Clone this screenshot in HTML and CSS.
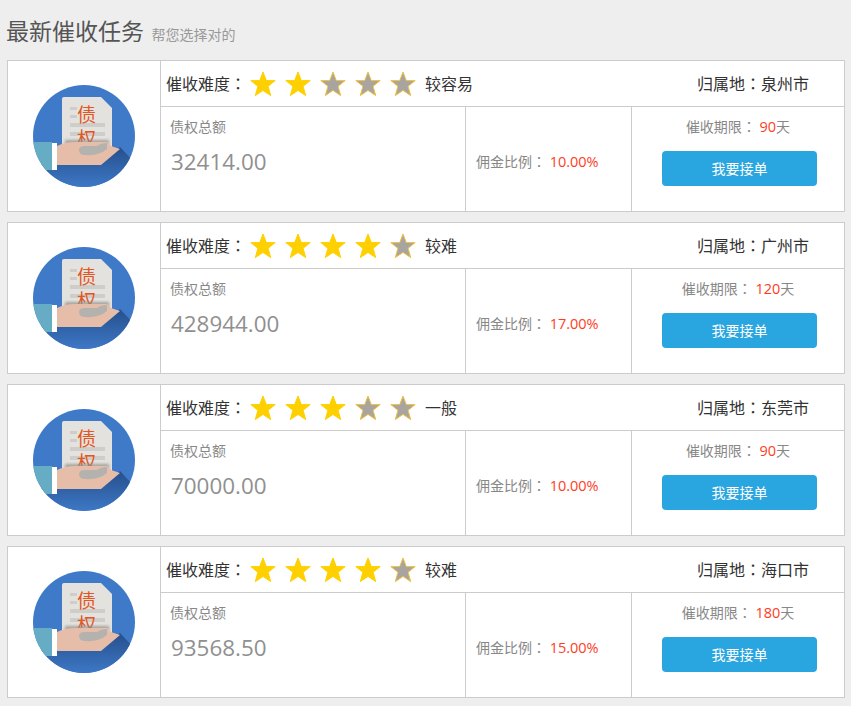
FILE: index.html
```html
<!DOCTYPE html>
<html lang="zh-CN">

<head>
    <meta charset="UTF-8">
    <title>最新催收任务</title>
    <link rel="stylesheet" href="styles.css">
</head>

<body>

    <svg class="defs" width="0" height="0">
        <defs>
            <clipPath id="round"><circle cx="51" cy="51" r="51"/></clipPath>
            <filter id="soft" x="-20%" y="-50%" width="140%" height="200%"><feGaussianBlur stdDeviation="1.5"/></filter>
            <linearGradient id="shade" x1="0" y1="0" x2="0" y2="1">
                <stop offset="0" stop-color="#264f8c"/>
                <stop offset="1" stop-color="#3d78c6"/>
            </linearGradient>
            <symbol id="paper" viewBox="0 0 102 102">
                <g clip-path="url(#round)">
                    <rect width="102" height="102" fill="#3e7ac8"/>
                    <path d="M0 78H68L87 62L102 78V102H0Z" fill="url(#shade)"/>
                </g>
                <path d="M31 12H68L79 23V62H29V14Q29 12 31 12Z" fill="#e4e2df"/>
                <path d="M37 22H44V25H37ZM37 30H44V33H37ZM37 38H72V42H37ZM37 47H72V51H37Z" fill="#cfcdca"/>
            </symbol>
            <symbol id="hand" viewBox="0 0 102 102">
                <path d="M32 55H76V60H32Z" fill="#8f8d8a" opacity=".75" filter="url(#soft)"/>
                <g clip-path="url(#round)">
                    <path d="M0 57H19V85H0Z" fill="#65acc4"/>
                </g>
                <rect x="19" y="58" width="5" height="27" fill="#fff"/>
                <path d="M24 61Q32 57 42 57H74L78 61L87 64L68 80H24Z" fill="#e6bda8"/>
                <path d="M46 65Q46 61 52 61H64Q68 58 74 58V64Q66 71 52 70Q46 70 46 65Z" fill="#b4b2af"/>
            </symbol>
        </defs>
    </svg>

    <h2 class="title">最新催收任务 <small>帮您选择对的</small></h2>

    <!-- 任务列表 -->
    <div class="task">
        <div class="pic">
            <svg class="badge" width="102" height="102" viewBox="0 0 102 102">
                <use href="#paper"/>
                <text x="53.5" y="37" class="badge-text">债<tspan x="53.5" dy="24">权</tspan></text>
                <use href="#hand"/>
            </svg>
        </div>
        <div class="info">
            <div class="head">
                <span class="level-label">催收难度<span class="colon">：</span></span>
                <span class="stars">
                    <svg class="star on" viewBox="0 0 26 26"><path d="M13 1L16.3 9.6H25.2L18.1 15.3L20.7 24.6L13 19.4L5.3 24.6L7.9 15.3L.8 9.6H9.7Z"/></svg>
                    <svg class="star on" viewBox="0 0 26 26"><path d="M13 1L16.3 9.6H25.2L18.1 15.3L20.7 24.6L13 19.4L5.3 24.6L7.9 15.3L.8 9.6H9.7Z"/></svg>
                    <svg class="star" viewBox="0 0 26 26"><path d="M13 1L16.3 9.6H25.2L18.1 15.3L20.7 24.6L13 19.4L5.3 24.6L7.9 15.3L.8 9.6H9.7Z"/></svg>
                    <svg class="star" viewBox="0 0 26 26"><path d="M13 1L16.3 9.6H25.2L18.1 15.3L20.7 24.6L13 19.4L5.3 24.6L7.9 15.3L.8 9.6H9.7Z"/></svg>
                    <svg class="star" viewBox="0 0 26 26"><path d="M13 1L16.3 9.6H25.2L18.1 15.3L20.7 24.6L13 19.4L5.3 24.6L7.9 15.3L.8 9.6H9.7Z"/></svg>
                </span>
                <span class="level">较容易</span>
                <span class="area">归属地<span class="colon">：</span>泉州市</span>
            </div>
            <div class="body">
                <div class="amount">
                    <p class="amount-label">债权总额</p>
                    <p class="amount-num">32414.00</p>
                </div>
                <div class="rate">佣金比例<span class="colon">：</span> <em>10.00%</em></div>
                <div class="limit">
                    <p class="limit-text">催收期限<span class="colon">：</span> <em>90</em>天</p>
                    <a class="btn" href="#">我要接单</a>
                </div>
            </div>
        </div>
    </div>

    <div class="task">
        <div class="pic">
            <svg class="badge" width="102" height="102" viewBox="0 0 102 102">
                <use href="#paper"/>
                <text x="53.5" y="37" class="badge-text">债<tspan x="53.5" dy="24">权</tspan></text>
                <use href="#hand"/>
            </svg>
        </div>
        <div class="info">
            <div class="head">
                <span class="level-label">催收难度<span class="colon">：</span></span>
                <span class="stars">
                    <svg class="star on" viewBox="0 0 26 26"><path d="M13 1L16.3 9.6H25.2L18.1 15.3L20.7 24.6L13 19.4L5.3 24.6L7.9 15.3L.8 9.6H9.7Z"/></svg>
                    <svg class="star on" viewBox="0 0 26 26"><path d="M13 1L16.3 9.6H25.2L18.1 15.3L20.7 24.6L13 19.4L5.3 24.6L7.9 15.3L.8 9.6H9.7Z"/></svg>
                    <svg class="star on" viewBox="0 0 26 26"><path d="M13 1L16.3 9.6H25.2L18.1 15.3L20.7 24.6L13 19.4L5.3 24.6L7.9 15.3L.8 9.6H9.7Z"/></svg>
                    <svg class="star on" viewBox="0 0 26 26"><path d="M13 1L16.3 9.6H25.2L18.1 15.3L20.7 24.6L13 19.4L5.3 24.6L7.9 15.3L.8 9.6H9.7Z"/></svg>
                    <svg class="star" viewBox="0 0 26 26"><path d="M13 1L16.3 9.6H25.2L18.1 15.3L20.7 24.6L13 19.4L5.3 24.6L7.9 15.3L.8 9.6H9.7Z"/></svg>
                </span>
                <span class="level">较难</span>
                <span class="area">归属地<span class="colon">：</span>广州市</span>
            </div>
            <div class="body">
                <div class="amount">
                    <p class="amount-label">债权总额</p>
                    <p class="amount-num">428944.00</p>
                </div>
                <div class="rate">佣金比例<span class="colon">：</span> <em>17.00%</em></div>
                <div class="limit">
                    <p class="limit-text">催收期限<span class="colon">：</span> <em>120</em>天</p>
                    <a class="btn" href="#">我要接单</a>
                </div>
            </div>
        </div>
    </div>

    <div class="task">
        <div class="pic">
            <svg class="badge" width="102" height="102" viewBox="0 0 102 102">
                <use href="#paper"/>
                <text x="53.5" y="37" class="badge-text">债<tspan x="53.5" dy="24">权</tspan></text>
                <use href="#hand"/>
            </svg>
        </div>
        <div class="info">
            <div class="head">
                <span class="level-label">催收难度<span class="colon">：</span></span>
                <span class="stars">
                    <svg class="star on" viewBox="0 0 26 26"><path d="M13 1L16.3 9.6H25.2L18.1 15.3L20.7 24.6L13 19.4L5.3 24.6L7.9 15.3L.8 9.6H9.7Z"/></svg>
                    <svg class="star on" viewBox="0 0 26 26"><path d="M13 1L16.3 9.6H25.2L18.1 15.3L20.7 24.6L13 19.4L5.3 24.6L7.9 15.3L.8 9.6H9.7Z"/></svg>
                    <svg class="star on" viewBox="0 0 26 26"><path d="M13 1L16.3 9.6H25.2L18.1 15.3L20.7 24.6L13 19.4L5.3 24.6L7.9 15.3L.8 9.6H9.7Z"/></svg>
                    <svg class="star" viewBox="0 0 26 26"><path d="M13 1L16.3 9.6H25.2L18.1 15.3L20.7 24.6L13 19.4L5.3 24.6L7.9 15.3L.8 9.6H9.7Z"/></svg>
                    <svg class="star" viewBox="0 0 26 26"><path d="M13 1L16.3 9.6H25.2L18.1 15.3L20.7 24.6L13 19.4L5.3 24.6L7.9 15.3L.8 9.6H9.7Z"/></svg>
                </span>
                <span class="level">一般</span>
                <span class="area">归属地<span class="colon">：</span>东莞市</span>
            </div>
            <div class="body">
                <div class="amount">
                    <p class="amount-label">债权总额</p>
                    <p class="amount-num">70000.00</p>
                </div>
                <div class="rate">佣金比例<span class="colon">：</span> <em>10.00%</em></div>
                <div class="limit">
                    <p class="limit-text">催收期限<span class="colon">：</span> <em>90</em>天</p>
                    <a class="btn" href="#">我要接单</a>
                </div>
            </div>
        </div>
    </div>

    <div class="task">
        <div class="pic">
            <svg class="badge" width="102" height="102" viewBox="0 0 102 102">
                <use href="#paper"/>
                <text x="53.5" y="37" class="badge-text">债<tspan x="53.5" dy="24">权</tspan></text>
                <use href="#hand"/>
            </svg>
        </div>
        <div class="info">
            <div class="head">
                <span class="level-label">催收难度<span class="colon">：</span></span>
                <span class="stars">
                    <svg class="star on" viewBox="0 0 26 26"><path d="M13 1L16.3 9.6H25.2L18.1 15.3L20.7 24.6L13 19.4L5.3 24.6L7.9 15.3L.8 9.6H9.7Z"/></svg>
                    <svg class="star on" viewBox="0 0 26 26"><path d="M13 1L16.3 9.6H25.2L18.1 15.3L20.7 24.6L13 19.4L5.3 24.6L7.9 15.3L.8 9.6H9.7Z"/></svg>
                    <svg class="star on" viewBox="0 0 26 26"><path d="M13 1L16.3 9.6H25.2L18.1 15.3L20.7 24.6L13 19.4L5.3 24.6L7.9 15.3L.8 9.6H9.7Z"/></svg>
                    <svg class="star on" viewBox="0 0 26 26"><path d="M13 1L16.3 9.6H25.2L18.1 15.3L20.7 24.6L13 19.4L5.3 24.6L7.9 15.3L.8 9.6H9.7Z"/></svg>
                    <svg class="star" viewBox="0 0 26 26"><path d="M13 1L16.3 9.6H25.2L18.1 15.3L20.7 24.6L13 19.4L5.3 24.6L7.9 15.3L.8 9.6H9.7Z"/></svg>
                </span>
                <span class="level">较难</span>
                <span class="area">归属地<span class="colon">：</span>海口市</span>
            </div>
            <div class="body">
                <div class="amount">
                    <p class="amount-label">债权总额</p>
                    <p class="amount-num">93568.50</p>
                </div>
                <div class="rate">佣金比例<span class="colon">：</span> <em>15.00%</em></div>
                <div class="limit">
                    <p class="limit-text">催收期限<span class="colon">：</span> <em>180</em>天</p>
                    <a class="btn" href="#">我要接单</a>
                </div>
            </div>
        </div>
    </div>

</body>

</html>
```

FILE: styles.css
```css
html,
body {
    height: 706px;
    overflow: hidden;
}

body {
    margin: 0;
    padding: 0 6px 0 7px;
    background-color: #eeeeee;
    font-family: "Open Sans", "Noto Sans CJK SC", sans-serif;
    color: #333;
}

.defs {
    position: absolute;
}

/* centred full-width colon, as in the original font */
.colon {
    font-family: "Noto Sans CJK TC", sans-serif;
    font-feature-settings: "locl" 0;
}

.title {
    margin: 0 0 14px -1px;
    height: 46px;
    line-height: 63px;
    font-size: 23px;
    font-weight: 400;
    color: #555;
}

.title small {
    margin-left: 1.5px;
    font-size: 14px;
    color: #999;
}

.task {
    display: flex;
    box-sizing: border-box;
    height: 152px;
    margin-bottom: 10px;
    background: #fff;
    border: 1px solid #ccc;
}

.pic {
    display: flex;
    align-items: center;
    justify-content: center;
    box-sizing: border-box;
    width: 153px;
    border-right: 1px solid #ccc;
    padding-right: 1px;
}

.badge-text {
    font-size: 19px;
    fill: #e2571e;
    text-anchor: middle;
}

.info {
    flex: 1;
    display: flex;
    flex-direction: column;
}

.head {
    flex: none;
    display: flex;
    align-items: center;
    box-sizing: border-box;
    height: 46px;
    padding: 0 0 2px 5px;
    border-bottom: 1px solid #ccc;
    font-size: 16px;
    color: #333;
}

.stars {
    display: flex;
    gap: 9px;
    margin: 2px 9px 0 4px;
}

.star {
    width: 26px;
    height: 26px;
    fill: #a8a4a0;
    stroke: #f0c040;
    stroke-width: 1;
}

.star.on {
    fill: #ffd000;
    stroke: #ffd000;
}

.area {
    margin-left: auto;
    margin-right: 35px;
}

.body {
    flex: 1;
    display: flex;
}

.amount {
    box-sizing: border-box;
    width: 305px;
    padding: 9px 0 0 9px;
    border-right: 1px solid #ccc;
}

.amount-label {
    margin: 0;
    font-size: 14px;
    color: #888;
}

.amount-num {
    margin: 10px 0 0 1px;
    font-size: 22.4px;
    color: #909090;
}

.rate {
    box-sizing: border-box;
    width: 166px;
    padding: 6px 0 0 10px;
    border-right: 1px solid #ccc;
    line-height: 96px;
    font-size: 14px;
    color: #888;
}

em {
    font-style: normal;
    font-size: 14.5px;
    color: #ff3c1e;
}

.limit {
    flex: 1;
    text-align: center;
    padding-top: 9px;
}

.limit-text {
    margin: 0 0 15px;
    font-size: 14px;
    color: #888;
}

.btn {
    display: block;
    width: 155px;
    height: 35px;
    margin-left: 30px;
    line-height: 35px;
    background: #29a6df;
    border-radius: 4px;
    color: #fff;
    font-size: 14px;
    text-decoration: none;
}
```
